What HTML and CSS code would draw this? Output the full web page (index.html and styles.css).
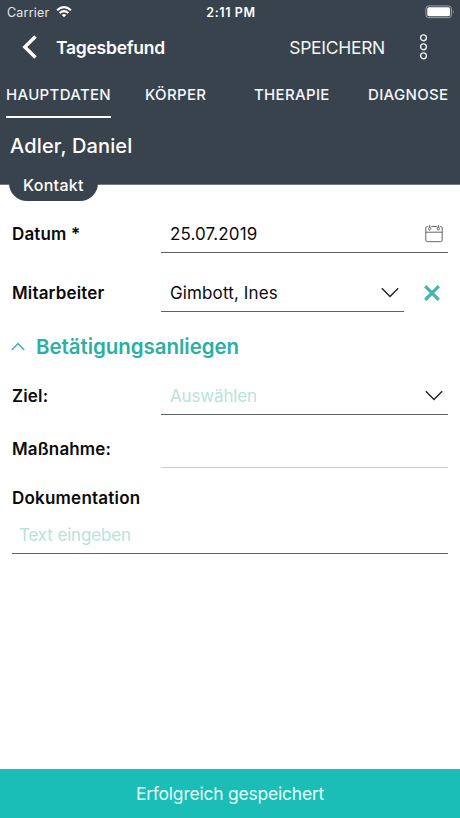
FILE: index.html
```html
<!DOCTYPE html>
<html lang="de">
<head>
<meta charset="utf-8">
<title>Tagesbefund</title>
<link rel="stylesheet" href="styles.css">
</head>
<body>
<div class="app">
  <header class="header">
    <div class="status">
      <div class="carrier"><span>Carrier</span>
        <svg width="16" height="12" viewBox="0 0 16 12" fill="none" stroke="#fff" stroke-width="2"><path d="M1 4.3Q8-2 15 4.3M3.6 7Q8 3.2 12.4 7"/><path d="M8 11.3 5.7 9Q8 7.2 10.3 9Z" fill="#fff" stroke="none"/></svg>
      </div>
      <span class="time">2:11 PM</span>
      <svg class="battery" width="30" height="14" viewBox="0 0 30 14"><rect x=".9" y=".9" width="25.6" height="11.8" rx="3" fill="none" stroke="#9ba1a6"/><rect x="2.3" y="2.3" width="22.8" height="9" rx="1.7" fill="#fff"/><path d="M28 4.8q1.5 2 0 4z" fill="#9ba1a6"/></svg>
    </div>
    <div class="nav">
      <svg class="back" width="16" height="26" viewBox="0 0 16 26" fill="none" stroke="#fff" stroke-width="3.4"><path d="M13.5 2.5 2.8 13 13.5 23.5"/></svg>
      <h1 class="title">Tagesbefund</h1>
      <span class="save">SPEICHERN</span>
      <svg class="more" width="9" height="28" viewBox="0 0 9 28" fill="none" stroke="#e9edef" stroke-width="1.4"><circle cx="4.5" cy="4.8" r="2.9"/><circle cx="4.5" cy="13.8" r="2.9"/><circle cx="4.5" cy="22.8" r="2.9"/></svg>
    </div>
    <nav class="tabs">
      <span class="tab active">HAUPTDATEN</span>
      <span class="tab">KÖRPER</span>
      <span class="tab">THERAPIE</span>
      <span class="tab">DIAGNOSE</span>
    </nav>
    <div class="patient"><span class="name">Adler, Daniel</span></div>
    <div class="pill"><span>Kontakt</span></div>
  </header>
  <main class="form">
    <div class="row date">
      <span class="label l-date">Datum *</span>
      <div class="field"><span class="v-date">25.07.2019</span>
        <svg class="calendar" width="20" height="20" viewBox="0 0 20 20" fill="none" stroke="#666" stroke-width="1"><path d="M4.2 2.5H3.3Q1.8 2.5 1.8 4v12q0 1.7 1.7 1.7h13q1.7 0 1.7-1.7V4q0-1.5-1.5-1.5h-.9M7.2 2.5h5.6M1.8 8.2h16.4M5.7 1v3M14.3 1v3"/><circle cx="5.7" cy="4.7" r="1.2"/><circle cx="14.3" cy="4.7" r="1.2"/></svg>
      </div>
    </div>
    <div class="row staff">
      <span class="label l-staff">Mitarbeiter</span>
      <div class="field"><span class="v-staff">Gimbott, Ines</span>
        <svg class="chevron" width="18" height="11" viewBox="0 0 18 11" fill="none" stroke="#222" stroke-width="1.4"><path d="m.8 1.2 8.2 8.2 8.2-8.2"/></svg>
      </div>
      <svg class="clear" width="16" height="16" viewBox="0 0 16 16" fill="none" stroke="#45b5ac" stroke-width="3.2"><path d="m1.2 1.2 13.6 13.6m0-13.6L1.2 14.8"/></svg>
    </div>
    <div class="section">
      <svg width="14" height="9" viewBox="0 0 14 9" fill="none" stroke="#2fb0a6" stroke-width="1.3"><path d="m.8 8 6.2-6.5L13.2 8"/></svg>
      <h2 class="heading">Betätigungsanliegen</h2>
    </div>
    <div class="row goal">
      <span class="label l-goal">Ziel:</span>
      <div class="field"><span class="hint v-goal">Auswählen</span>
        <svg class="chevron" width="18" height="11" viewBox="0 0 18 11" fill="none" stroke="#222" stroke-width="1.4"><path d="m.8 1.2 8.2 8.2 8.2-8.2"/></svg>
      </div>
    </div>
    <div class="row action">
      <span class="label l-action">Maßnahme:</span>
      <div class="field light"></div>
    </div>
    <div class="label doc-label"><span>Dokumentation</span></div>
    <div class="field doc"><span class="hint v-doc">Text eingeben</span></div>
  </main>
  <footer class="toast"><span>Erfolgreich gespeichert</span></footer>
</div>
</body>
</html>
```
FILE: styles.css
```css
* { box-sizing: border-box; }
body { margin: 0; background: #fff; font-family: Inter, "Liberation Sans", sans-serif; color: #0b0b0b; }
h1, h2 { margin: 0; }
svg { display: block; flex: none; }
span { white-space: nowrap; }
.app { width: 460px; height: 818px; display: flex; flex-direction: column; overflow: hidden; }

.header { position: relative; height: 185px; flex: none; background: #39434d; color: #fff; border-bottom: 1px solid #737a80; }
.status { height: 24px; display: grid; grid-template-columns: 1fr auto 1fr; align-items: center; padding: 0 5px 0 7px; font-size: 12.5px; }
.carrier { display: flex; align-items: center; gap: 7px; color: #e4e8eb; letter-spacing: .2px; }
.time { font-weight: 600; font-size: 12.5px; letter-spacing: .6px; }
.battery { justify-self: end; }
.nav { height: 46px; display: flex; align-items: center; padding: 0 32px 0 22px; }
.title { margin-left: 18px; font-size: 17.5px; font-weight: 600; letter-spacing: -.25px; }
.save { margin-left: auto; font-size: 17.5px; letter-spacing: -.3px; color: #f0f4f6; }
.more { margin-left: 34px; }
.tabs { height: 48px; display: grid; grid-template-columns: 139px 109px 114px auto; padding-left: 6px; }
.tab { justify-self: start; height: 48px; line-height: 49px; font-size: 15px; font-weight: 500; letter-spacing: .32px; color: #f4f8fa; }
.active { border-bottom: 2px solid #fff; }
.patient { height: 56px; padding-left: 10px; line-height: 56px; font-size: 20px; font-weight: 500; letter-spacing: .15px; }
.pill { position: absolute; left: 9px; top: 168px; width: 89px; height: 33px; padding-left: 14px; line-height: 34px; border-radius: 0 0 18px 18px; background: #39434d; font-size: 16px; font-weight: 500; letter-spacing: .3px; }

.form { flex: 1; padding: 29px 12px 0; font-size: 17px; }
.row { display: flex; height: 39px; }
.label { font-weight: 600; letter-spacing: .15px; }
.row .label { width: 149px; line-height: 41px; }
.field { flex: 1; height: 39px; display: flex; align-items: center; justify-content: space-between; padding: 0 5px 0 9px; border-bottom: 1px solid #5f6265; }
.field span { padding-top: 2px; }
.calendar { margin-right: -1px; margin-top: 1px; }
.light { border-bottom-color: #c8cacb; }
.hint { color: #b7e3dc; letter-spacing: -.15px; }
.v-date, .v-staff { letter-spacing: .13px; }
.staff { margin-top: 20px; }
.clear { margin: 12px 8px 0 20px; }
.section { display: flex; align-items: center; gap: 11px; height: 32px; margin-top: 18px; color: #2bafa5; }
.section svg { margin-left: -1px; }
.heading { font-size: 20.5px; font-weight: 600; letter-spacing: -.05px; }
.goal { margin-top: 14px; }
.action { margin-top: 14px; }
.doc-label { margin-top: 19px; height: 22px; line-height: 22px; letter-spacing: .22px; }
.doc { margin-top: 6px; padding-left: 7px; }
.toast { height: 49px; flex: none; background: #1bbdb7; color: #e2fffc; text-align: center; line-height: 49px; font-size: 17.5px; letter-spacing: -.22px; }
```
